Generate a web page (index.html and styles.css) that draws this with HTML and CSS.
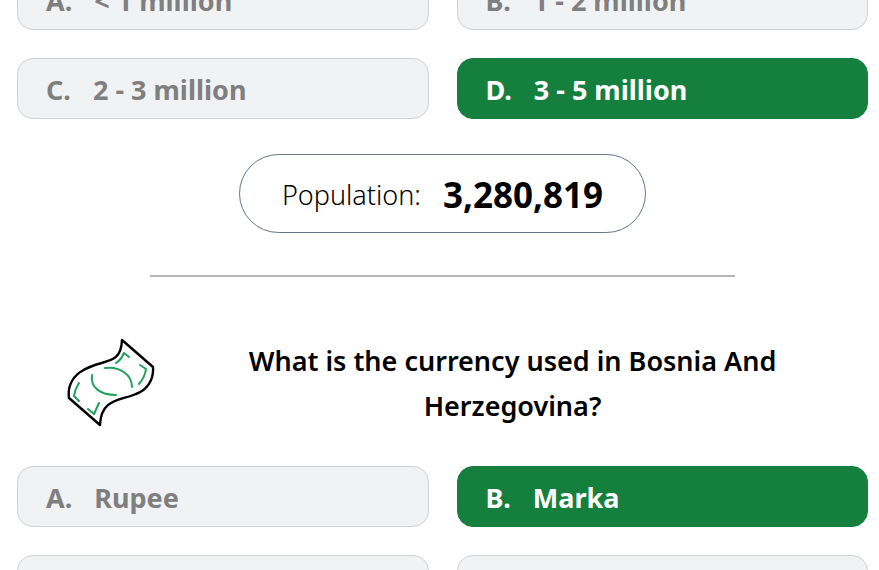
FILE: index.html
```html
<!DOCTYPE html>
<html lang="en">
<head>
    <meta charset="UTF-8">
    <meta name="viewport" content="width=device-width, initial-scale=1.0">
    <title>Country Quiz</title>
    <link rel="stylesheet" href="styles.css">
</head>
<body>
    <main class="quiz">
        <section class="options">
            <button type="button" class="option"><span>A.</span><span>&lt; 1 million</span></button>
            <button type="button" class="option"><span>B.</span><span>1 - 2 million</span></button>
            <button type="button" class="option"><span>C.</span><span>2 - 3 million</span></button>
            <button type="button" class="option correct"><span>D.</span><span>3 - 5 million</span></button>
        </section>

        <p class="answer">
            <span>Population:</span>
            <strong>3,280,819</strong>
        </p>

        <hr class="divider">

        <section>
            <div class="question">
                <svg class="question-icon" viewBox="0 0 88 90" fill="none" stroke-width="2.4" stroke-linecap="round" stroke-linejoin="round" aria-hidden="true">
                    <path stroke="#000" d="M55 2 L86 29 C87 42 80 52 69 56 C52 63 34 61 33 87 L2 60 C0 46 8 37 15 33 C35 20 54 29 55 2 Z"/>
                    <path stroke="#22a05a" stroke-width="2" d="M38 30 C53 28 65 37 65 49 M25 37 C23 50 34 57 49 57 M49 25 Q54 22 57 15 L62 19 M73 27 L79 31 Q78 39 72 46 M12 45 Q8 51 7 58 L12 63 M21 71 L27 76 L32 65"/>
                </svg>
                <h2>What is the currency used in Bosnia And Herzegovina?</h2>
            </div>
            <div class="options">
                <button type="button" class="option"><span>A.</span><span>Rupee</span></button>
                <button type="button" class="option correct"><span>B.</span><span>Marka</span></button>
                <button type="button" class="option"><span>C.</span><span>Euro</span></button>
                <button type="button" class="option"><span>D.</span><span>Dinar</span></button>
            </div>
        </section>
    </main>
</body>
</html>
```

FILE: styles.css
```css
body {
    margin: 0;
    height: 100vh;
    overflow: hidden;
    background-color: #fff;
    color: #000;
    font-family: "Segoe UI", "Noto Sans", sans-serif;
    font-size: 27px;
}
.quiz {
    margin-top: -31px;
    padding: 0 11px 0 17px;
}
.options {
    display: grid;
    grid-template-columns: 1fr 1fr;
    gap: 28px;
}
.option {
    display: flex;
    align-items: center;
    gap: 22px;
    padding: 9px 28px 7px;
    border: 1px solid #cfd1d4;
    border-radius: 16px;
    background-color: #f1f2f4;
    color: #7f7f7f;
    font-family: inherit;
    font-size: 27px;
    font-weight: 700;
    line-height: 43px;
    text-align: left;
}
.option.correct {
    border-color: #15803d;
    background-color: #15803d;
    color: #fff;
}
.answer {
    display: flex;
    align-items: center;
    gap: 22px;
    width: fit-content;
    margin: 35px auto 42px;
    padding: 17px 42px 15px;
    border: 1px solid #64748b;
    border-radius: 40px;
    font-weight: 300;
    line-height: 45px;
}
.answer strong {
    font-size: 35px;
    font-weight: 700;
}
.divider {
    width: 585px;
    max-width: 100%;
    height: 2px;
    margin: 0 auto 61px;
    border: none;
    background-color: #b5b5b5;
}
.question {
    display: flex;
    align-items: center;
    padding-left: 50px;
    margin-bottom: 38px;
}
.question-icon {
    flex: none;
    width: 88px;
    height: 90px;
}
.question h2 {
    flex: 1;
    margin: 0;
    padding: 0 70px 0 72px;
    font-size: 27px;
    font-weight: 600;
    line-height: 45px;
    text-align: center;
}
```
